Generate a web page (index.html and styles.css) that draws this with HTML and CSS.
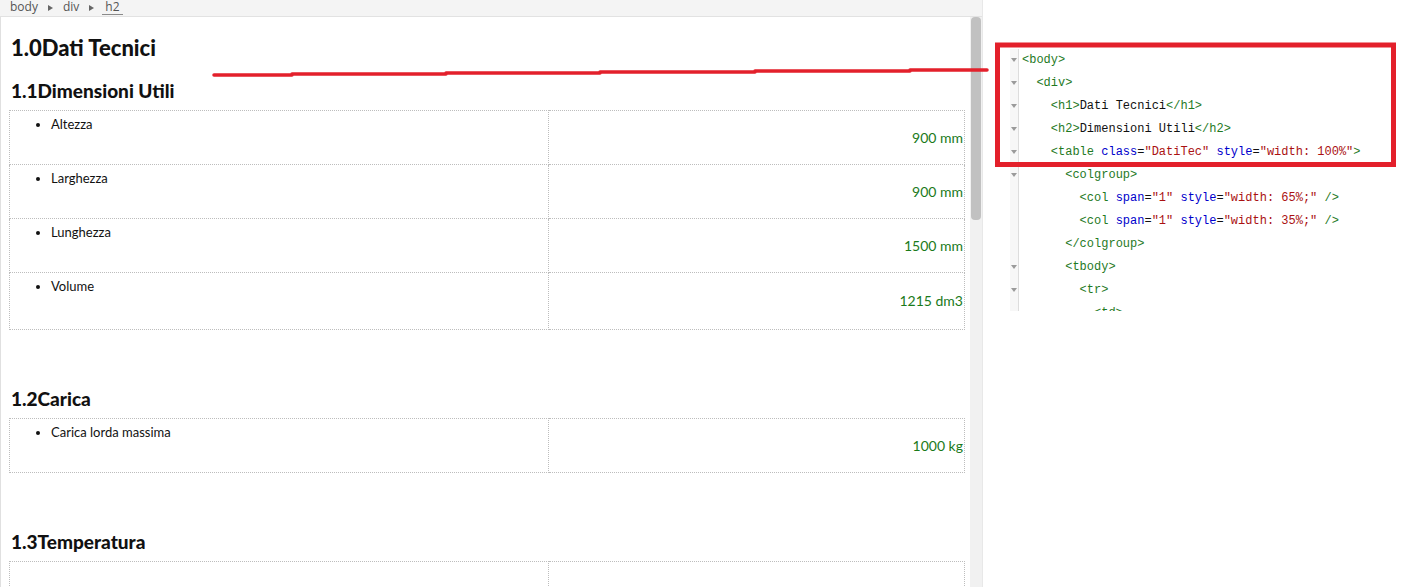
FILE: index.html
```html
<!DOCTYPE html>
<html lang="it">
<head>
    <meta charset="UTF-8">
    <title>Dati Tecnici - Editor</title>
    <link rel="stylesheet" href="styles.css">
</head>
<body>
    <section class="editor">
        <div class="path-bar">
            <span class="crumb">body</span>
            <span class="crumb-sep"></span>
            <span class="crumb">div</span>
            <span class="crumb-sep"></span>
            <span class="crumb current">h2</span>
        </div>

        <div class="editor-body">
            <div class="doc">
                <h1>1.0Dati Tecnici</h1>

                <h2 class="first">1.1Dimensioni Utili</h2>
                <table class="dati-tec">
                    <colgroup>
                        <col class="col-label">
                        <col class="col-value">
                    </colgroup>
                    <tbody>
                        <tr>
                            <td class="label"><ul><li>Altezza</li></ul></td>
                            <td class="value">900 mm</td>
                        </tr>
                        <tr>
                            <td class="label"><ul><li>Larghezza</li></ul></td>
                            <td class="value">900 mm</td>
                        </tr>
                        <tr>
                            <td class="label"><ul><li>Lunghezza</li></ul></td>
                            <td class="value">1500 mm</td>
                        </tr>
                        <tr class="tall">
                            <td class="label"><ul><li>Volume</li></ul></td>
                            <td class="value">1215 dm3</td>
                        </tr>
                    </tbody>
                </table>

                <h2>1.2Carica</h2>
                <table class="dati-tec">
                    <colgroup>
                        <col class="col-label">
                        <col class="col-value">
                    </colgroup>
                    <tbody>
                        <tr>
                            <td class="label"><ul><li>Carica lorda massima</li></ul></td>
                            <td class="value">1000 kg</td>
                        </tr>
                    </tbody>
                </table>

                <h2>1.3Temperatura</h2>
                <table class="dati-tec">
                    <colgroup>
                        <col class="col-label">
                        <col class="col-value">
                    </colgroup>
                    <tbody>
                        <tr>
                            <td class="label"></td>
                            <td class="value"></td>
                        </tr>
                    </tbody>
                </table>
            </div>
            <div class="scrollbar"><div class="thumb"></div></div>
        </div>
    </section>

    <section class="source">
        <div class="code-panel">
            <div class="cm-line"><span class="fold open"></span><span class="code"><span class="t">&lt;body&gt;</span></span></div>
            <div class="cm-line"><span class="fold open"></span><span class="code">  <span class="t">&lt;div&gt;</span></span></div>
            <div class="cm-line"><span class="fold open"></span><span class="code">    <span class="t">&lt;h1&gt;</span>Dati Tecnici<span class="t">&lt;/h1&gt;</span></span></div>
            <div class="cm-line"><span class="fold open"></span><span class="code">    <span class="t">&lt;h2&gt;</span>Dimensioni Utili<span class="t">&lt;/h2&gt;</span></span></div>
            <div class="cm-line"><span class="fold open"></span><span class="code">    <span class="t">&lt;table</span> <span class="a">class</span>=<span class="s">"DatiTec"</span> <span class="a">style</span>=<span class="s">"width: 100%"</span><span class="t">&gt;</span></span></div>
            <div class="cm-line"><span class="fold open"></span><span class="code">      <span class="t">&lt;colgroup&gt;</span></span></div>
            <div class="cm-line"><span class="fold"></span><span class="code">        <span class="t">&lt;col</span> <span class="a">span</span>=<span class="s">"1"</span> <span class="a">style</span>=<span class="s">"width: 65%;"</span> <span class="t">/&gt;</span></span></div>
            <div class="cm-line"><span class="fold"></span><span class="code">        <span class="t">&lt;col</span> <span class="a">span</span>=<span class="s">"1"</span> <span class="a">style</span>=<span class="s">"width: 35%;"</span> <span class="t">/&gt;</span></span></div>
            <div class="cm-line"><span class="fold"></span><span class="code">      <span class="t">&lt;/colgroup&gt;</span></span></div>
            <div class="cm-line"><span class="fold open"></span><span class="code">      <span class="t">&lt;tbody&gt;</span></span></div>
            <div class="cm-line"><span class="fold open"></span><span class="code">        <span class="t">&lt;tr&gt;</span></span></div>
            <div class="cm-line"><span class="fold open"></span><span class="code">          <span class="t">&lt;td&gt;</span></span></div>
        </div>
    </section>

    <!-- annotazione rossa sopra lo screenshot -->
    <svg class="annotation" width="1408" height="587" viewBox="0 0 1408 587">
        <path d="M214 75 H292 V74 H446 V73 H600 V72 H755 V71 H910 V70 H987" fill="none" stroke="#e3202b" stroke-width="3.5" stroke-linecap="round" stroke-linejoin="round"/>
        <rect x="997.5" y="45" width="396" height="119.5" fill="none" stroke="#e3202b" stroke-width="5"/>
    </svg>
</body>
</html>
```

FILE: styles.css
```css
body {
    margin: 0;
    width: 1408px;
    height: 587px;
    overflow: hidden;
    display: flex;
    background-color: #ffffff;
    font-family: Lato, "Open Sans", sans-serif;
    position: relative;
}

/* pannello editor a sinistra */
.editor {
    width: 982px;
    display: flex;
    flex-direction: column;
    border-right: 1px solid #e8e8e8;
}
.path-bar {
    height: 16px;
    flex-shrink: 0;
    background-color: #f4f4f4;
    border-bottom: 1px solid #e2e2e2;
    display: flex;
    align-items: flex-start;
    padding-left: 8px;
    font-size: 12px;
    line-height: 14px;
    color: #555;
    font-family: "Open Sans", "Noto Sans", sans-serif;
}
.crumb {
    padding: 0 2px;
}
.crumb.current {
    border-bottom: 1px solid #8a8a8a;
    padding: 0 3px;
}
.crumb-sep {
    width: 0;
    height: 0;
    border-top: 3px solid transparent;
    border-bottom: 3px solid transparent;
    border-left: 5px solid #666;
    margin: 5px 8px 0 8px;
}
.editor-body {
    flex-grow: 1;
    display: flex;
    border-left: 1px solid #e0e0e0;
    overflow: hidden;
}
.doc {
    flex-grow: 1;
    padding: 0 6px 0 8px;
    overflow: hidden;
}
.doc h1 {
    font-size: 22px;
    line-height: 26px;
    font-weight: 900;
    margin: 18px 0 0 2px;
    color: #111;
}
.doc h2 {
    font-size: 19px;
    line-height: 22px;
    font-weight: 900;
    margin: 22px 0 8px 2px;
    color: #111;
}
.doc h2.first {
    margin-top: 19px;
}
.dati-tec {
    width: 956px;
    border-collapse: collapse;
    margin-bottom: 58px;
}
.col-label {
    width: 539px;
}
.dati-tec td {
    border: 1px dotted #bdbdbd;
    height: 49px;
    padding: 0;
}
.dati-tec tr.tall td {
    height: 52px;
}
.dati-tec td.label {
    vertical-align: top;
    padding-top: 4px;
}
.label ul {
    margin: 0;
    padding-left: 41px;
}
.label li {
    font-size: 13px;
    line-height: 18px;
    color: #111;
}
.dati-tec td.value {
    vertical-align: middle;
    text-align: right;
    padding-right: 1px;
    font-size: 14px;
    line-height: 18px;
    color: #1a7a1a;
}
.scrollbar {
    width: 10px;
    background-color: #f1f1f1;
    padding: 0 1px;
}
.thumb {
    height: 203px;
    background-color: #c1c1c1;
    border-radius: 4px;
}

/* pannello sorgente a destra */
.source {
    flex-grow: 1;
    padding: 49px 0 0 27px;
}
.code-panel {
    height: 262px;
    overflow: hidden;
    font-family: "Liberation Mono", "DejaVu Sans Mono", monospace;
    font-size: 12px;
    color: #111;
}
.cm-line {
    display: flex;
    height: 23px;
    line-height: 23px;
}
.fold {
    width: 8px;
    flex-shrink: 0;
    background-color: #f7f7f7;
    border-right: 1px solid #dddddd;
    display: flex;
    justify-content: center;
    align-items: center;
}
.fold.open::before {
    content: "";
    width: 0;
    height: 0;
    border-left: 3px solid transparent;
    border-right: 3px solid transparent;
    border-top: 4px solid #9a9a9a;
    margin-top: -2px;
}
.code {
    white-space: pre;
    padding-left: 3px;
}
.code .t {
    color: #1f7a1f;
}
.code .a {
    color: #0000cc;
}
.code .s {
    color: #aa1111;
}

.annotation {
    position: absolute;
    top: 0;
    left: 0;
    pointer-events: none;
}
```
